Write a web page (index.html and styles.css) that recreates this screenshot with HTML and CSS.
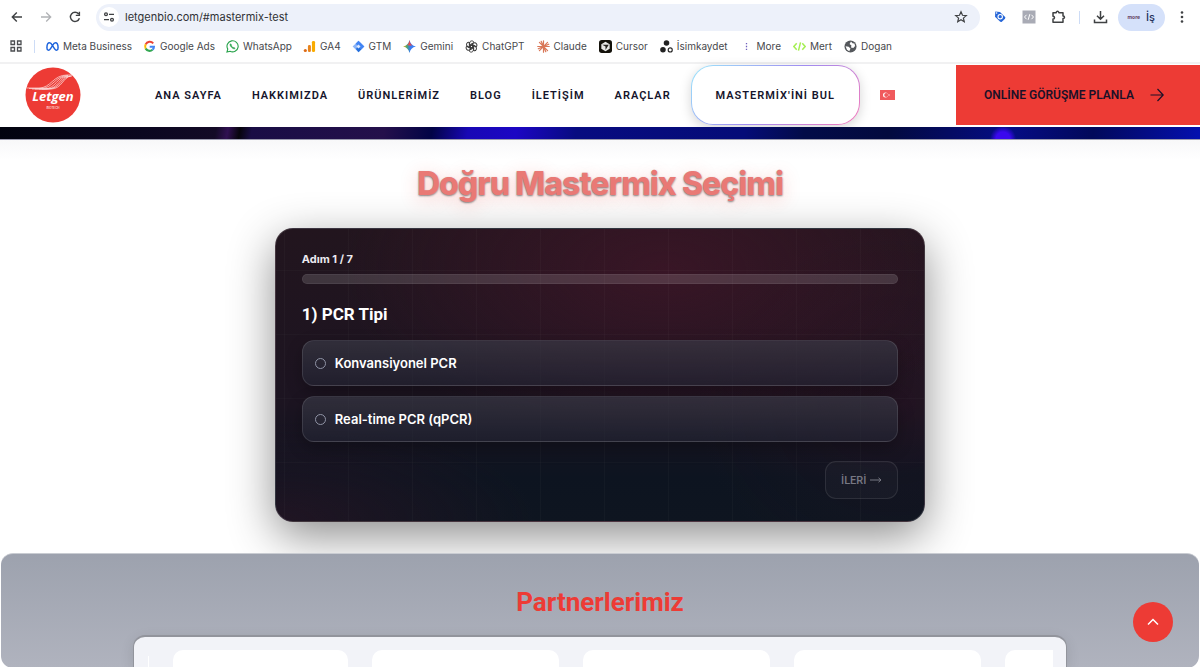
FILE: index.html
```html
<!DOCTYPE html>
<html lang="tr">
<head>
<meta charset="utf-8">
<meta name="viewport" content="width=device-width, initial-scale=1">
<title>Letgen Biotech</title>
<link rel="stylesheet" href="styles.css">
</head>
<body>
<div class="window">
  <div class="browser">
    <div class="toolbar">
      <div class="history">
        <button class="tool" aria-label="Geri"><svg width="14" height="14" viewBox="0 0 14 14" fill="none" stroke="#3f4143" stroke-width="1.4"><path d="M12 7H2.5M6.8 2.5 2.3 7l4.5 4.5"/></svg></button>
        <button class="tool" aria-label="İleri"><svg width="14" height="14" viewBox="0 0 14 14" fill="none" stroke="#b0b2b5" stroke-width="1.3"><path d="M2 7h9.5M7.2 2.5 11.7 7l-4.5 4.5"/></svg></button>
        <button class="tool" aria-label="Yenile"><svg width="14" height="14" viewBox="0 0 14 14" fill="none" stroke="#3f4143" stroke-width="1.4"><path d="M11.4 8.3A4.6 4.6 0 1 1 10.6 4M11.4 1.8v3.6H7.8"/></svg></button>
      </div>
      <div class="omnibox">
        <button class="site-info" aria-label="Site bilgileri"><svg width="12" height="12" viewBox="0 0 12 12" fill="none" stroke="#3f4143" stroke-width="1.3"><circle cx="3" cy="3.3" r="1.4"/><path d="M6 3.3h5M1 8.7h5"/><circle cx="9" cy="8.7" r="1.4"/></svg></button>
        <input class="url" type="text" aria-label="Adres" value="letgenbio.com/#mastermix-test">
        <button class="tool" aria-label="Yer işareti ekle"><svg width="14" height="14" viewBox="0 0 14 14" fill="none" stroke="#3f4143" stroke-width="1.2" stroke-linejoin="miter"><path d="m7 1.8 1.5 3.5 3.8.3-2.9 2.5.9 3.7L7 9.8l-3.3 2 .9-3.7L1.7 5.6l3.8-.3z"/></svg></button>
      </div>
      <div class="extensions">
        <button class="tool" aria-label="Etiket"><svg width="14" height="14" viewBox="0 0 14 14"><path d="M2.3 1.5 7 2l5.400 5.200-.4 1.500-3.400 3.200-1.400-.1L2 6.700z" fill="#2767d8"/><circle cx="7.200" cy="6.700" r="2.200" fill="none" stroke="#fff" stroke-width="1.100"/><circle cx="3.600" cy="3" r=".8" fill="#fff"/></svg></button>
        <button class="tool" aria-label="Kod"><svg width="14" height="14" viewBox="0 0 14 14"><path fill="#a9abb5" d="M.5.5h13v13H.5z"/><path d="M4.500 4.800 2.500 7l2 2.200M9.500 4.800l2 2.200-2 2.200M7.800 4.200 6.200 9.800" fill="none" stroke="#fff"/></svg></button>
        <button class="tool" aria-label="Uzantılar"><svg width="15" height="14" viewBox="0 0 15 14" fill="none" stroke="#3f4143" stroke-width="1.500" stroke-linejoin="round"><path d="M2 2.700h3.200c-.2-1.800 2.800-1.800 2.600 0H12v3.200c2 0 2 2.700 0 2.700v3.700H2V9.100c2 0 2-2.800 0-2.800z"/></svg></button>
      </div>
      <span class="divider"></span>
      <button class="tool" aria-label="İndirilenler"><svg width="15" height="14" viewBox="0 0 15 14" fill="none" stroke="#3f4143" stroke-width="1.500"><path d="M7.500 1v8M4 5.700l3.500 3.500L11 5.700M1.500 9.500v3h12v-3"/></svg></button>
      <button class="profile"><span class="avatar">more</span>İş</button>
      <button class="tool" aria-label="Menü"><svg width="6" height="14" viewBox="0 0 6 14" fill="#3f4143"><circle cx="3" cy="2.500" r="1.300"/><circle cx="3" cy="7" r="1.300"/><circle cx="3" cy="11.500" r="1.300"/></svg></button>
    </div>
    <nav class="bookmarks" aria-label="Yer işaretleri">
      <button class="apps" aria-label="Tüm yer işaretleri"><svg width="12" height="12" viewBox="0 0 12 12" fill="none" stroke="#4a4c4f" stroke-width="1.300"><path d="M1 1h3.500v3.500H1zM7.500 1H11v3.500H7.500zM1 7.500h3.500V11H1zM7.500 7.500H11V11H7.500z"/></svg></button>
      <span class="divider"></span>
      <a class="mark" href="#"><svg viewBox="0 0 14 14" fill="none" stroke="#1c63dd" stroke-width="1.600"><path d="M7 6C5.700 3.700 4.900 3 3.800 3 2 3 1 5.700 1 8.300c0 3.200 2.200 3.400 3.700 1.200L7 6c1.300-2.300 2.100-3 3.200-3C12 3 13 5.700 13 8.300c0 3.200-2.200 3.400-3.700 1.200z"/></svg>Meta Business</a>
      <a class="mark" href="#"><svg viewBox="0 0 14 14" fill="none" stroke-width="2.200"><path d="M11 3.600A4.800 4.800 0 0 0 2.900 4.700" stroke="#ea4335"/><path d="M2.900 4.700a4.800 4.800 0 0 0 0 4.600" stroke="#fbbc05"/><path d="M2.900 9.300a4.800 4.800 0 0 0 7.300 1.200" stroke="#34a853"/><path d="M10.200 10.500C11.300 9.700 11.800 8.600 11.800 7.200H7.200" stroke="#4285f4"/></svg>Google Ads</a>
      <a class="mark" href="#"><svg viewBox="0 0 14 14" fill="none" stroke="#29a34c" stroke-width="1.200"><path d="m1 13 .9-3.200a6 6 0 1 1 2.400 2.300z"/><path d="M4.800 4c-.9.900-.5 2 1.100 3.800C7.500 9.400 8.800 10 9.900 9.100L8.500 7.900l-.8.500L5.700 6.300l.4-.8z" fill="#29a34c" stroke-width=".600"/></svg>WhatsApp</a>
      <a class="mark" href="#"><svg viewBox="0 0 14 14"><circle cx="2.500" cy="11.300" r="1.700" fill="#dd6b16"/><rect x="5.300" y="5.500" width="3.200" height="7.500" rx="1.400" fill="#e8831d"/><rect x="9.600" y="1" width="3.400" height="12" rx="1.500" fill="#f9ab00"/></svg>GA4</a>
      <a class="mark" href="#"><svg viewBox="0 0 14 14"><path d="m7 .7 6.300 6.300L7 13.300.7 7z" fill="#8ab4f8"/><path d="M7 .7 13.300 7 10 10.300 4 4z" fill="#4285f4"/><path d="m4.200 9.800 2.800-3 3 3.500-3 3z" fill="#246fdb"/><path d="m7 4.800 2.200 2.200L7 9.200 4.800 7z" fill="#dfeaff"/></svg>GTM</a>
      <a class="mark" href="#"><svg viewBox="0 0 14 14"><defs><linearGradient id="gem"><stop stop-color="#f4b51d"/><stop offset=".3" stop-color="#4fa66b"/><stop offset=".550" stop-color="#397bf2"/><stop offset="1" stop-color="#4285f4"/></linearGradient></defs><path d="M7 0c.9 4 3 6.100 7 7-4 .9-6.100 3-7 7-.9-4-3-6.100-7-7 4-.9 6.100-3 7-7" fill="url(#gem)"/><path d="M7 0c.5 3 1.400 4.800 3 5.900L6.500 6 4.700 5.500C6 4.300 6.600 2.600 7 0" fill="#e84c4b"/></svg>Gemini</a>
      <a class="mark" href="#"><svg viewBox="0 0 14 14" fill="none" stroke="#333" stroke-width="1"><g id="petal"><path d="M5 6V3.300C5 .3 9.300.3 9.600 2.700L5.800 5v4"/></g><use href="#petal" transform="rotate(60 7 7)"/><use href="#petal" transform="rotate(120 7 7)"/><use href="#petal" transform="rotate(180 7 7)"/><use href="#petal" transform="rotate(240 7 7)"/><use href="#petal" transform="rotate(300 7 7)"/></svg>ChatGPT</a>
      <a class="mark" href="#"><svg viewBox="0 0 14 14" stroke="#d97757" stroke-width="1.300" stroke-linecap="round"><path d="M7 .8v12.400M.8 7h12.400M2.600 2.600l8.800 8.800M11.400 2.600l-8.800 8.800M4.500 1.400l5 11.200M1.400 9.500l11.200-5"/></svg>Claude</a>
      <a class="mark" href="#"><svg viewBox="0 0 14 14"><rect width="14" height="14" rx="3" fill="#14120b"/><path d="m7 2 4.500 2.500v5L7 12 2.500 9.500v-5z" fill="#e9e9e7"/><path d="M3.500 5h7L7 10.800V7z" fill="#25231e"/></svg>Cursor</a>
      <a class="mark" href="#"><svg viewBox="0 0 14 14" fill="#222"><circle cx="7" cy="3.200" r="3"/><circle cx="3.200" cy="10.500" r="3"/><circle cx="11" cy="10.700" r="2.200" fill="none" stroke="#222" stroke-width="1.200"/></svg>İsimkaydet</a>
      <a class="mark" href="#"><svg viewBox="0 0 14 14" fill="#6f61bd"><path d="M6.300 3.300h1.400v1.400H6.300zM6.300 6.300h1.400v1.400H6.300zM6.300 9.300h1.400v1.400H6.300z"/></svg>More</a>
      <a class="mark" href="#"><svg viewBox="0 0 14 14" fill="none" stroke="#a5ef53" stroke-width="1.600"><path d="M4 3.500.9 7 4 10.500M10 3.500 13.100 7 10 10.500M8.100 2.500 5.900 11.500"/></svg>Mert</a>
      <a class="mark" href="#"><svg viewBox="0 0 14 14"><circle cx="7" cy="7" r="6.500" fill="#55585c"/><path d="M7.500 1.700 6 4.300 8 6l-.5 2 2.500.7 2-2.200-.8-2.600-2-.3zM1.700 6.800 5 7.200l2 2-1.300 2.900-2.500-1.700z" fill="#fff"/></svg>Dogan</a>
    </nav>
  </div>

  <header class="site-header">
    <a class="logo" href="#" aria-label="Letgen">
      <svg viewBox="0 0 56 56"><circle cx="28" cy="28" r="27.500" fill="#ed3b35"/><g fill="none" stroke="#fff" stroke-width=".7" opacity=".85"><path d="M2 21h12c12 0 14-13 28-13h6"/><path d="M4 21.500h12c12 0 14-13 27-13"/><path d="M7 22h12c12 0 13-13 24-13"/><path d="M10 22h12c12 0 12-13 23-13"/><path d="M14 22h9c13 0 13-13 24-13"/><path d="M17 22h9c11 0 12-12 20-13"/></g><text class="logo-name" x="28" y="34" text-anchor="middle">Letgen</text><text class="logo-sub" x="28" y="42" text-anchor="middle">BIOTECH</text></svg>
    </a>
    <nav class="menu" aria-label="Ana menü">
      <a href="#">ANA SAYFA</a>
      <a href="#">HAKKIMIZDA</a>
      <a href="#">ÜRÜNLERİMİZ</a>
      <a href="#">BLOG</a>
      <a href="#">İLETİŞİM</a>
      <a href="#">ARAÇLAR</a>
    </nav>
    <a class="finder" href="#mastermix-test">MASTERMİX'İNİ BUL</a>
    <button class="language" aria-label="Türkçe"><svg width="15" height="10" viewBox="0 0 15 10"><path fill="#f05a5d" d="M0 0h15v10H0z"/><circle cx="5.500" cy="5" r="2.500" fill="#fff"/><circle cx="6.200" cy="5" r="2" fill="#f05a5d"/><path d="m7.700 5 1.800-.7v1.400z" fill="#fff"/></svg></button>
    <a class="meeting" href="#">ONLİNE GÖRÜŞME PLANLA<svg width="14" height="14" viewBox="0 0 14 14" fill="none" stroke="#1b1128" stroke-width="1.200"><path d="M.5 7h12.500M7.500 1l5.700 6-5.700 6"/></svg></a>
  </header>

  <main>
    <div class="banner"></div>
    <section class="quiz" id="mastermix-test">
      <h1>Doğru Mastermix Seçimi</h1>
      <form class="card">
        <label class="step" for="progress">Adım 1 / 7</label>
        <progress class="progress" id="progress" value="0" max="7"></progress>
        <fieldset class="question">
          <legend>1) PCR Tipi</legend>
          <label class="option"><input type="radio" name="pcr">Konvansiyonel PCR</label>
          <label class="option"><input type="radio" name="pcr">Real-time PCR (qPCR)</label>
        </fieldset>
        <button class="next" type="button" disabled>İLERİ <svg width="12" height="8" viewBox="0 0 12 8" fill="none" stroke="#777883"><path d="M0 4h11M8.500 1.800 11 4 8.500 6.200"/></svg></button>
      </form>
    </section>
    <section class="partners">
      <h2>Partnerlerimiz</h2>
      <div class="track">
        <span class="edge"></span>
        <div class="partner"></div>
        <div class="partner"></div>
        <div class="partner"></div>
        <div class="partner"></div>
        <div class="partner last"></div>
      </div>
    </section>
  </main>
  <button class="to-top" aria-label="Yukarı çık"><svg width="12" height="8" viewBox="0 0 12 8" fill="none" stroke="#fff" stroke-width="1.500"><path d="m1 6.500 5-5 5 5"/></svg></button>
</div>
</body>
</html>
```
FILE: styles.css
```css
* { box-sizing: border-box; }

body {
  margin: 0;
  background: #fff;
  font-family: Inter, "Noto Sans", sans-serif;
  color: #15142b;
}

a { color: inherit; text-decoration: none; }

button {
  margin: 0;
  padding: 0;
  border: 0;
  background: none;
  font: inherit;
}

.window {
  display: flex;
  flex-direction: column;
  height: 100vh;
  overflow: hidden;
}

/* Browser chrome */
.browser {
  flex: none;
  background: #fff;
  border-bottom: 2px solid #f1f1f2;
}

.toolbar {
  display: flex;
  align-items: center;
  height: 34px;
  padding: 0 15px 0 10px;
}

.tool, .apps { display: flex; align-items: center; justify-content: center; }
.history { display: flex; gap: 15px; margin-right: 14px; }

.omnibox {
  flex: 1;
  display: flex;
  align-items: center;
  height: 27px;
  padding: 0 12px 0 3px;
  border-radius: 14px;
  background: #edf1fa;
}

.site-info {
  display: flex;
  align-items: center;
  justify-content: center;
  width: 20px;
  height: 20px;
  border-radius: 50%;
  background: #fff;
}

.url {
  flex: 1;
  min-width: 0;
  margin-left: 6px;
  padding: 0;
  border: 0;
  outline: 0;
  background: none;
  font: 11px Inter, "Noto Sans", sans-serif;
  color: #303236;
}

.extensions { display: flex; gap: 15px; margin: 0 13px; }

.divider {
  width: 1px;
  height: 13px;
  margin-right: 13px;
  background: #cddcf6;
}

.profile {
  display: flex;
  align-items: center;
  gap: 6px;
  height: 27px;
  margin: 0 14px 0 10px;
  padding: 0 10px;
  border-radius: 14px;
  background: #d5e1fa;
  font-size: 11px;
  font-weight: 500;
  color: #23315b;
}

.avatar { font-size: 5px; font-weight: 700; color: #654464; }

.bookmarks {
  display: flex;
  align-items: center;
  gap: 12px;
  height: 28px;
  padding: 0 10px 4px;
  font-size: 10px;
  color: #47484c;
  white-space: nowrap;
}

.bookmarks .divider { margin: 0 -1px 0 0; }
.mark { display: flex; align-items: center; gap: 4px; }
.mark svg { width: 13px; height: 13px; }
.mark + .mark { margin-left: -1px; }
.mark:nth-of-type(n + 6) { margin-left: 0; }

/* Site header */
.site-header {
  flex: none;
  display: flex;
  align-items: center;
  height: 63px;
  padding: 1px 0 2px;
  background: #fff;
  font: 600 11px Roboto, "Noto Sans", sans-serif;
  white-space: nowrap;
}

.logo { flex: none; width: 56px; height: 56px; margin: 0 74px 0 25px; }
.logo svg { display: block; width: 100%; height: 100%; }
.logo-name { font: italic 700 13px "Open Sans", sans-serif; fill: #fff; }
.logo-sub { font: 3px Inter, sans-serif; fill: #fff; }

.menu { display: flex; gap: 30px; letter-spacing: 1px; }

.finder {
  display: flex;
  align-items: center;
  justify-content: center;
  align-self: stretch;
  width: 169px;
  margin-left: 20px;
  border: 1px solid transparent;
  border-radius: 22px;
  background:
    linear-gradient(#fff, #fff) padding-box,
    linear-gradient(135deg, #9be7fb, #a08cf0 50%, #f47aba) border-box;
  box-shadow: 0 3px 12px #0000002b;
  letter-spacing: 1px;
}

.language { display: flex; margin-left: 20px; }

.meeting {
  display: flex;
  align-items: center;
  justify-content: center;
  gap: 16px;
  align-self: stretch;
  width: 244px;
  margin-left: auto;
  padding-right: 8px;
  background: #ed3b35;
  font-size: 12px;
  color: #1b1128;
}

/* Content */
main { flex: none; }

.banner {
  height: 13px;
  border-bottom: 1px solid #9b9bae;
  background:
    radial-gradient(circle at 1003px 12px, #3a08ee 0 7px, transparent 13px),
    radial-gradient(ellipse at 350px 18px, #4a1760, transparent 60px),
    linear-gradient(100deg, #02030f 0, #0b0720 12%, #130a26 18%, #301052 19%, #06040c 20%, #190d45 21%, #24104b 32%, #020346 36%, #1808b5 39%, #1c06c4 43%, #070b80 48%, #050c78 62%, #020b48 67%, #030a3e 74%, #050c86 84%, #02095a 91%, #0410b0 100%);
}

.quiz {
  padding: 22px 0 31px;
  background: linear-gradient(#f8f8f9, #fff 20px);
  overflow: hidden;
}

.quiz h1 {
  margin: 0 0 22px;
  font-size: 32px;
  line-height: 44px;
  font-weight: 800;
  letter-spacing: -1px;
  text-align: center;
  color: #e97975;
  text-shadow: 0 1px 2px #00000077, 0 4px 18px #ed3b3544;
}

.card {
  display: flex;
  flex-direction: column;
  width: 54.200%;
  margin: 0 auto;
  padding: 23px 26px 22px;
  border: 1px solid #ffffff24;
  border-radius: 18px;
  background:
    repeating-linear-gradient(90deg, transparent 0 8px, #ffffff06 8px 9px, transparent 9px 64px),
    repeating-linear-gradient(transparent 0 41px, #ffffff05 41px 42px, transparent 42px 64px),
    radial-gradient(ellipse 50% 58% at 60% 14%, #441629aa, transparent),
    radial-gradient(ellipse 30% 60% at 95% 60%, #3a122433, transparent),
    radial-gradient(ellipse 40% 35% at 0 100%, #30142588, transparent),
    linear-gradient(#22151e, #1c1421 60%, #0d1420 85%, #0e1520);
  background-clip: padding-box, padding-box, border-box, border-box, border-box, border-box;
  box-shadow: 0 14px 46px #00000073;
}

.step {
  font-size: 11px;
  line-height: 15px;
  font-weight: 700;
  color: #eceaf0;
}

.progress {
  appearance: none;
  width: 100%;
  height: 10px;
  margin-top: 7px;
  border: 1px solid #ffffff10;
  border-radius: 5px;
  background: #ffffff24;
  overflow: hidden;
}

.progress::-webkit-progress-bar { background: transparent; }
.progress::-webkit-progress-value { background: #ed3b35; }

.question {
  display: flex;
  flex-direction: column;
  gap: 10px;
  min-width: 0;
  margin: 18px 0 0;
  padding: 0;
  border: 0;
}

.question legend {
  margin-bottom: 14px;
  padding: 0;
  font: 700 17px/24px Roboto, "Noto Sans", sans-serif;
  color: #fff;
}

.option {
  display: flex;
  align-items: center;
  gap: 9px;
  height: 46px;
  padding: 0 12px;
  border: 1px solid #ffffff1c;
  border-radius: 12px;
  background: linear-gradient(#ffffff18, #ffffff08), #191b2999;
  box-shadow: 0 6px 16px #00000044;
  font-size: 13px;
  font-weight: 600;
  color: #fff;
}

.option input {
  appearance: none;
  width: 11px;
  height: 11px;
  margin: 0;
  border: 1px solid #9094a6;
  border-radius: 50%;
}

.option input:checked { background: #ed3b35; }

.next {
  display: flex;
  align-items: center;
  justify-content: center;
  gap: 4px;
  align-self: flex-end;
  width: 73px;
  height: 38px;
  margin-top: 19px;
  border: 1px solid #ffffff18;
  border-radius: 11px;
  background: #ffffff07;
  font: 500 11px Roboto, "Noto Sans", sans-serif;
  color: #777883;
}

.partners {
  margin: 0 1px;
  border-top: 1px solid #c9ccd2;
  border-radius: 12px;
  background: linear-gradient(#9da2ae, #b0b3be);
  overflow: hidden;
}

.partners h2 {
  margin: 30px 0 15px;
  font: 700 26px/36px Roboto, "Noto Sans", sans-serif;
  text-align: center;
  color: #ed3b35;
}

.track {
  display: grid;
  grid-template-columns: 1px 175px 187px 187px 187px 48px;
  column-gap: 24px;
  width: 78%;
  height: 33px;
  margin: 0 auto;
  padding: 13px 14px 0;
  border: 1px solid #92949c;
  border-width: 2px 1px 0;
  border-radius: 12px 12px 0 0;
  background: #f2f3f8;
  box-shadow: 0 4px 14px #0000001c;
  overflow: hidden;
}

.edge { margin-top: 6px; background: #fff; }
.partner { border-radius: 10px 10px 0 0; background: #fff; }
.partner.last { border-radius: 10px 0 0 0; }

.to-top {
  position: fixed;
  right: 27px;
  bottom: 25px;
  display: flex;
  align-items: center;
  justify-content: center;
  width: 40px;
  height: 40px;
  border-radius: 50%;
  background: #ed3b35;
}
```
